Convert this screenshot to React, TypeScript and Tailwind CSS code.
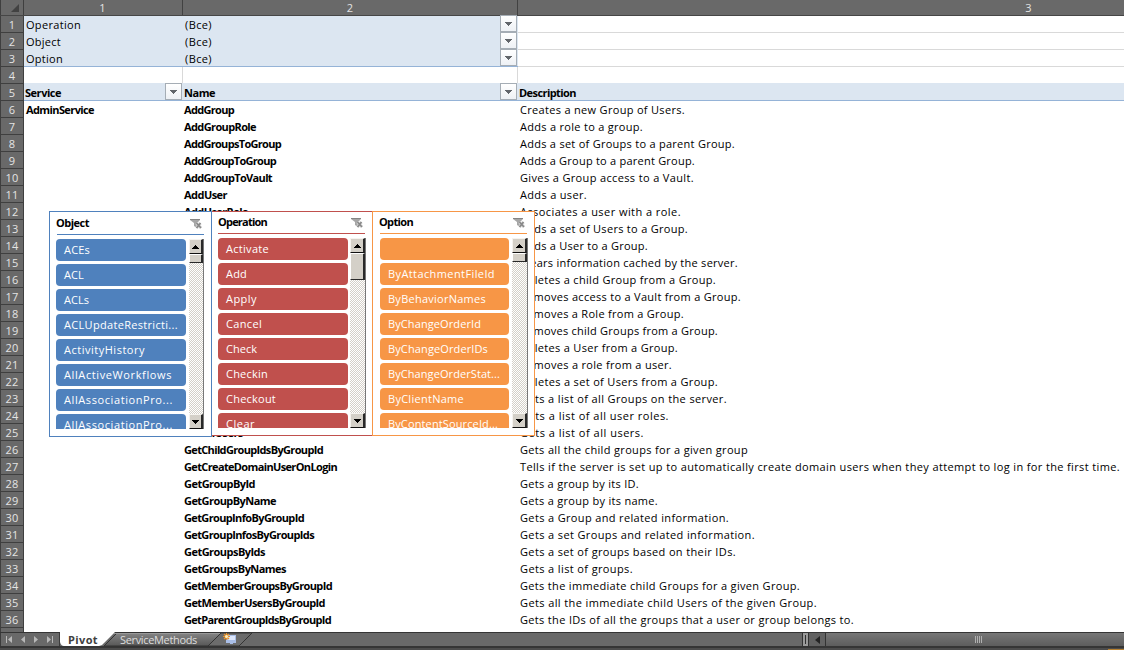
import { useLayoutEffect, useRef, useState } from "react";
import type { ReactNode } from "react";

/** Text tracked so that it fills a given advance width. */
function Fit({ text, w, className = "" }: { text: string; w: number; className?: string }) {
  const ref = useRef<HTMLSpanElement>(null);
  const [spacing, setSpacing] = useState(0);
  useLayoutEffect(() => {
    const el = ref.current;
    if (!el) return;
    el.style.letterSpacing = "0px";
    const natural = el.getBoundingClientRect().width;
    const value = (w - natural) / text.length;
    el.style.letterSpacing = `${value}px`;
    setSpacing(value);
  }, [text, w]);
  return (
    <span ref={ref} className={`inline-block shrink-0 whitespace-pre ${className}`} style={{ letterSpacing: `${spacing}px` }}>
      {text}
    </span>
  );
}

const methods: [string, number, string, number][] = [
  ["AddGroup", 50, "Creates a new Group of Users.", 165],
  ["AddGroupRole", 72, "Adds a role to a group.", 123],
  ["AddGroupsToGroup", 97, "Adds a set of Groups to a parent Group.", 215],
  ["AddGroupToGroup", 92, "Adds a Group to a parent Group.", 175],
  ["AddGroupToVault", 88, "Gives a Group access to a Vault.", 174],
  ["AddUser", 43, "Adds a user.", 67],
  ["AddUserRole", 64, "Associates a user with a role.", 161],
  ["AddUsersToGroup", 90, "Adds a set of Users to a Group.", 168],
  ["AddUserToGroup", 85, "Adds a User to a Group.", 128],
  ["ClearCache", 60, "Clears information cached by the server.", 218],
  ["DeleteGroupFromGroup", 125, "Deletes a child Group from a Group.", 196],
  ["DeleteGroupFromVault", 120, "Removes access to a Vault from a Group.", 221],
  ["DeleteGroupRole", 88, "Removes a Role from a Group.", 164],
  ["DeleteGroupsFromGroup", 130, "Removes child Groups from a Group.", 198],
  ["DeleteUserFromGroup", 118, "Deletes a User from a Group.", 158],
  ["DeleteUserRole", 80, "Removes a role from a user.", 152],
  ["DeleteUsersFromGroup", 122, "Deletes a set of Users from a Group.", 198],
  ["GetAllGroups", 70, "Gets a list of all Groups on the server.", 207],
  ["GetAllRoles", 64, "Gets a list of all user roles.", 149],
  ["GetAllUsers", 59, "Gets a list of all users.", 124],
  ["GetChildGroupIdsByGroupId", 139, "Gets all the child groups for a given group", 228],
  ["GetCreateDomainUserOnLogin", 153, "Tells if the server is set up to automatically create domain users when they attempt to log in for the first time.", 600],
  ["GetGroupById", 71, "Gets a group by its ID.", 119],
  ["GetGroupByName", 92, "Gets a group by its name.", 138],
  ["GetGroupInfoByGroupId", 120, "Gets a Group and related information.", 209],
  ["GetGroupInfosByGroupIds", 130, "Gets a set Groups and related information.", 235],
  ["GetGroupsByIds", 81, "Gets a set of groups based on their IDs.", 216],
  ["GetGroupsByNames", 102, "Gets a list of groups.", 113],
  ["GetMemberGroupsByGroupId", 148, "Gets the immediate child Groups for a given Group.", 280],
  ["GetMemberUsersByGroupId", 141, "Gets all the immediate child Users of the given Group.", 297],
  ["GetParentGroupIdsByGroupId", 147, "Gets the IDs of all the groups that a user or group belongs to.", 334],
];

function DropButton() {
  return (
    <span className="flex h-[17px] w-[17px] shrink-0 items-center justify-center border border-[#a5adb5] bg-gradient-to-b from-white to-[#eef1f5]">
      <svg width="7" height="4" viewBox="0 0 7 4" shapeRendering="crispEdges">
        <path d="M0 0h7v1H6v1H5v1H4v1H3V3H2V2H1V1H0z" fill="#62666b" />
      </svg>
    </span>
  );
}

function RowHead({ n }: { n: number }) {
  return (
    <div className="h-[17px] w-6 shrink-0 border-r border-b border-l border-[#3f3f3f] bg-[#696969] text-center text-[11px] leading-[17px] font-normal text-[#e4e4e4]">
      <Fit text={String(n)} w={n > 9 ? 13 : 6.5} />
    </div>
  );
}

const filters: [string, number][] = [["Operation", 55], ["Object", 35], ["Option", 37]];

function Sheet() {
  return (
    <div className="flex h-[632px] flex-col overflow-hidden bg-white">
      <div className="flex h-4 shrink-0 border-b border-[#464646] bg-[#696969] text-[11px] leading-[16px] text-[#e4e4e4]">
        <div className="flex w-6 shrink-0 items-end justify-end border-r border-l border-[#3f3f3f] pr-1 pb-[3px]">
          <svg width="8" height="8" viewBox="0 0 8 8"><path d="M8 0v8H0z" fill="#424242" /></svg>
        </div>
        <div className="w-[159px] shrink-0 border-r border-[#424242] pr-px text-center">1</div>
        <div className="w-[335px] shrink-0 border-r border-[#424242] text-center">2</div>
        <div className="w-[1021px] shrink-0 text-center">3</div>
      </div>
      {filters.map(([label, w], i) => (
        <div key={label} className="flex h-[17px] shrink-0 leading-[17px]">
          <RowHead n={i + 1} />
          <div className={`flex w-[494px] shrink-0 bg-[#dce6f1] ${i === 2 ? "border-b border-[#95b3d7]" : ""}`}>
            <div className="w-[159px] pl-[2px]"><Fit text={label} w={w} /></div>
            <div className="flex-1 pl-[2px]"><Fit text="(Все)" w={27} /></div>
            <div className="-mt-px mr-px"><DropButton /></div>
          </div>
          <div className="flex-1 border-b border-[#d9d9d9]" />
        </div>
      ))}
      <div className="flex h-4 shrink-0">
        <RowHead n={4} />
        <div className="w-[159px] border-r border-[#d9d9d9]" />
        <div className="w-[335px] border-r border-[#d9d9d9]" />
      </div>
      <div className="flex h-[18px] shrink-0 font-bold leading-[19px] font-stretch-90%">
        <div className="flex flex-col">
          <div className="h-px w-6 bg-[#3f3f3f]" />
          <RowHead n={5} />
        </div>
        <div className="flex flex-1 border-b border-[#95b3d7] bg-[#dce6f1]">
          <div className="flex w-[159px] justify-between pr-px pl-px"><Fit text="Service" w={36} /><DropButton /></div>
          <div className="flex w-[335px] justify-between pr-px pl-px"><Fit text="Name" w={31} /><DropButton /></div>
          <div className="pl-px"><Fit text="Description" w={57} /></div>
        </div>
      </div>
      {methods.map(([name, nw, text, tw], i) => (
        <div key={name} className="flex h-[17px] shrink-0 leading-[17px]">
          <RowHead n={i + 6} />
          <div className="w-[159px] shrink-0 pl-[2px] font-bold font-stretch-90%">{i === 0 && <Fit text="AdminService" w={68} />}</div>
          <div className="w-[335px] shrink-0 pl-px font-bold font-stretch-90%"><Fit text={name} w={nw} /></div>
          <div className="pl-[2px]"><Fit text={text} w={tw} /></div>
        </div>
      ))}
      <div className="h-[5px] w-6 shrink-0 border-r border-l border-[#3f3f3f] bg-[#696969]" />
    </div>
  );
}

function ScrollButton({ down = false }: { down?: boolean }) {
  return (
    <div className="flex h-[15px] w-full shrink-0 items-center justify-center border-t border-r-2 border-b border-l border-t-[#f5f3ef] border-r-[#292929] border-b-[#111111] border-l-[#f5f3ef] bg-[#d4d0c8]">
      <svg width="7" height="4" viewBox="0 0 7 4" shapeRendering="crispEdges">
        <path d={down ? "M0 0h7v1H6v1H5v1H4v1H3V3H2V2H1V1H0z" : "M0 4h7V3H6V2H5V1H4V0H3v1H2v1H1v1H0z"} fill="#000" />
      </svg>
    </div>
  );
}

function ClearFilter() {
  return (
    <svg width="12" height="10" viewBox="0 0 12 10">
      <path d="M0 0h10v1L7 4v5L4 7V4L0 1z" fill="#a6a6a6" />
      <path d="M0 .5h10" stroke="#858585" />
      <path d="M6.500 4l4.500 5M10.500 4L6.500 9" stroke="#d8d8d8" strokeWidth="3" />
      <path d="M6.500 4l4.500 5M10.500 4L6.500 9" stroke="#888888" strokeWidth="1.6" />
    </svg>
  );
}

type SlicerProps = { title: ReactNode; items: [string, number][]; box: string; head: string; fill: string; thumb: string; body: string; list: string; bar: string };

function Slicer({ title, items, box, head, fill, thumb, body, list, bar }: SlicerProps) {
  return (
    <section className={`absolute flex flex-col border bg-white ${box}`}>
      <div className={`flex shrink-0 justify-between border-b font-bold leading-[20px] font-stretch-90% ${head}`}>
        {title}
        <span className="pt-[6px] pr-[2px]"><ClearFilter /></span>
      </div>
      <div className={`mt-1 flex justify-between overflow-hidden ${body}`}>
        <div className={`flex flex-col gap-[3px] ${list}`}>
          {items.map(([label, w], i) => (
            <div key={i} className={`h-[22px] shrink-0 rounded-[4px] pl-2 leading-[21px] text-white ${fill}`}>
              {label && <Fit text={label} w={w} />}
            </div>
          ))}
        </div>
        <div className={`flex shrink-0 flex-col border-r border-[#777777] bg-[repeating-conic-gradient(#d4d0c8_0_25%,#ffffff_0_50%)] bg-[length:2px_2px] ${bar}`}>
          <ScrollButton />
          <div className={`w-full shrink-0 border-t border-r-2 border-b border-l border-t-white border-r-[#292929] border-b-[#292929] border-l-white bg-[#d4d0c8] ${thumb}`} />
          <div className="flex-1" />
          <ScrollButton down />
        </div>
      </div>
    </section>
  );
}

const objects: [string, number][] = [["ACEs", 26], ["ACL", 20], ["ACLs", 25], ["ACLUpdateRestricti...", 114], ["ActivityHistory", 81], ["AllActiveWorkflows", 108], ["AllAssociationPro...", 109], ["AllAssociationPro...", 109]];
const operations: [string, number][] = [["Activate", 43], ["Add", 21], ["Apply", 31], ["Cancel", 36], ["Check", 31], ["Checkin", 42], ["Checkout", 50], ["Clear", 29]];
const options: [string, number][] = [["", 0], ["ByAttachmentFileId", 107], ["ByBehaviorNames", 98], ["ByChangeOrderId", 93], ["ByChangeOrderIDs", 100], ["ByChangeOrderStat...", 112], ["ByClientName", 76], ["ByContentSourceId...", 110]];

function TabBar() {
  return (
    <footer className="flex h-[18px] flex-col bg-[#353535]">
      <div className="flex h-[15px] border-t border-b border-[#353535] bg-[#696969]">
        <svg width="60" height="13" viewBox="0 0 60 13" className="shrink-0">
          <path d="M.5 0v13M59.5 0v13" stroke="#3b3b3b" />
          <path d="M6 3h1v7H6zM12 3v7L8 6.500zM25 3v7l-4-3.500zM34 3v7l4-3.500zM47 3v7l4-3.500zM52 3h1v7h-1z" fill="#b8b8b8" />
        </svg>
        <div className="relative h-[13px] w-[196px] shrink-0">
          <svg width="196" height="15" viewBox="0 0 196 15" className="absolute -top-px left-0">
            <defs><linearGradient id="tab" x2="0" y2="1"><stop stopColor="#858585" /><stop offset="1" stopColor="#575757" /></linearGradient></defs>
            <path d="M148 14l13-13h31l-13 13z" fill="#6c6c6c" stroke="#343434" />
            <path d="M44 14L57 1h104l-13 13z" fill="url(#tab)" stroke="#333333" />
            <path d="M54 1.500h106" stroke="#999999" />
            <path d="M0 0h55L44 11q-2 3-5 3H4q-3 0-4-4z" fill="#fff" />
            <path d="M166 3h10v8h-3v1h-3v-1h-4z" fill="#a9bee7" />
            <path d="M168 4h7v4h-7z" fill="#dce6fb" />
            <path d="M166.500 1v7M163 4.500h7M164 2l5 5M169 2l-5 5" stroke="#ee9228" strokeWidth="1.2" />
            <circle cx="166.500" cy="4.500" r="1.500" fill="#fff0b8" />
          </svg>
          <div className="relative flex leading-[13px]">
            <div className="w-[60px] pl-2 font-bold text-[#404040]"><Fit text="Pivot" w={30} /></div>
            <Fit text="ServiceMethods" w={77} className="text-[#dddddd]" />
          </div>
        </div>
        <div className="flex-1" />
        <div className="mr-px w-[5px] border-2 border-[#9a9a9a] bg-[#303030] outline outline-[#333333]" />
        <div className="flex w-4 items-center justify-center bg-[#626262]">
          <svg width="5" height="8" viewBox="0 0 5 8"><path d="M5 0v8L0 4z" fill="#242424" /></svg>
        </div>
        <div className="flex w-[299px] items-center border-l border-[#333333] bg-gradient-to-b from-[#777777] to-[#5d5d5d] pl-[149px]">
          <div className="flex h-[7px] gap-px">
            {[0, 1, 2, 3].map((i) => <i key={i} className="w-px bg-[#b0b0b0]" />)}
          </div>
        </div>
      </div>
      <div className="mt-px flex h-[2px] justify-end bg-[#4c4c4c]"><div className="mt-px w-4 bg-[#b8812f]" /></div>
    </footer>
  );
}

export default function App() {
  return (
    <main className="relative h-[650px] w-[1124px] overflow-hidden bg-white font-['Open_Sans','Noto_Sans',sans-serif] text-[11px] text-black">
      <Sheet />
      <TabBar />
      <Slicer title={<Fit text="Operation" w={49} />} items={operations} box="left-[211px] top-[211px] h-[225px] w-[163px] border-[#c0504d] pl-[6px]" head="h-[22px] w-[147px] border-[#c0504d]" fill="bg-[#c0504d]" thumb="h-[27px]" body="h-[190px] w-[148px]" list="w-[130px]" bar="w-4" />
      <Slicer title={<Fit text="Object" w={32} />} items={objects} box="left-[49px] top-[211px] h-[226px] w-[163px] border-[#4f81bd] pl-[6px]" head="h-[23px] w-[147px] border-[#4f81bd] ml-px pt-px -indent-px" fill="bg-[#4f81bd]" thumb="h-[9px]" body="h-[190px] w-[148px]" list="w-[130px]" bar="w-[15px]" />
      <Slicer title={<Fit text="Option" w={33} />} items={options} box="left-[372px] top-[211px] h-[225px] w-[163px] border-[#f79646] pl-[7px]" head="h-[22px] w-[147px] border-[#f79646] -indent-px" fill="bg-[#f79646]" thumb="h-[9px]" body="h-[190px] w-[148px]" list="w-[129px]" bar="w-4" />
    </main>
  );
}
